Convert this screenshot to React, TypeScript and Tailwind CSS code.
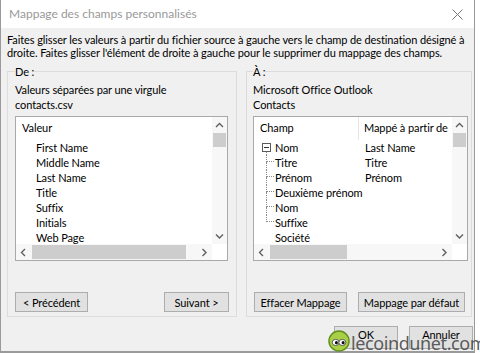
import React from "react";

const LEFT_ITEMS = [
  "First Name",
  "Middle Name",
  "Last Name",
  "Title",
  "Suffix",
  "Initials",
  "Web Page",
];

const CHILDREN = [
  { name: "Titre", mapped: "Titre" },
  { name: "Prénom", mapped: "Prénom" },
  { name: "Deuxième prénom", mapped: "" },
  { name: "Nom", mapped: "" },
  { name: "Suffixe", mapped: "" },
];

function Chevron({ dir }: { dir: "up" | "down" | "left" | "right" }) {
  const horiz = dir === "left" || dir === "right";
  const pts = {
    up: "1,5 4.5,1.5 8,5",
    down: "1,1.5 4.5,5 8,1.5",
    left: "5,1 1.5,4.5 5,8",
    right: "1.5,1 5,4.5 1.5,8",
  }[dir];
  return (
    <svg
      width={horiz ? 7 : 9}
      height={horiz ? 9 : 7}
      viewBox={horiz ? "0 0 7 9" : "0 0 9 7"}
    >
      <polyline points={pts} fill="none" stroke="#606060" strokeWidth="1.4" />
    </svg>
  );
}

function VScroll() {
  return (
    <div className="flex w-[15px] shrink-0 flex-col bg-[#f7f7f7]">
      <div className="flex h-[16px] items-center justify-center">
        <Chevron dir="up" />
      </div>
      <div className="mx-[1px] h-[14px] bg-[#cdcdcd]" />
      <div className="flex-1" />
      <div className="flex h-[16px] items-center justify-center">
        <Chevron dir="down" />
      </div>
    </div>
  );
}

function HScroll({ thumb }: { thumb: string }) {
  return (
    <div className="flex h-[16px] shrink-0">
      <div className="flex flex-1 items-center bg-[#f7f7f7]">
        <div className="flex h-full w-[15px] items-center justify-center">
          <Chevron dir="left" />
        </div>
        <div className={`ml-[1px] h-[14px] bg-[#cdcdcd] ${thumb}`} />
        <div className="flex-1" />
        <div className="flex h-full w-[15px] items-center justify-center">
          <Chevron dir="right" />
        </div>
      </div>
      <div className="w-[15px] bg-white" />
    </div>
  );
}

function Button({ label, w }: { label: string; w: string }) {
  return (
    <button
      className={`flex h-[20px] ${w} items-center justify-center whitespace-nowrap border border-[#adadad] bg-[#e1e1e1] text-[11px] leading-none text-black`}
    >
      {label}
    </button>
  );
}

function GroupBox({
  legend,
  className,
  children,
}: {
  legend: string;
  className: string;
  children: React.ReactNode;
}) {
  return (
    <fieldset
      className={`flex flex-col border border-[#dcdcdc] pb-[4px] ${className}`}
    >
      <legend className="h-[15px] leading-[15px]">{legend}</legend>
      {children}
    </fieldset>
  );
}

function SourceList() {
  return (
    <div className="flex h-[145px] w-[213px] flex-col border border-[#a9a9a9] bg-white">
      <div className="flex min-h-0 flex-1">
        <div className="flex-1 overflow-hidden">
          <div className="flex h-[23px] items-center pl-[6px]">Valeur</div>
          {LEFT_ITEMS.map((item) => (
            <div key={item} className="h-[15px] pl-[20px] leading-[15px]">
              {item}
            </div>
          ))}
        </div>
        <VScroll />
      </div>
      <HScroll thumb="w-[154px]" />
    </div>
  );
}

function TreeConnector({ last }: { last: boolean }) {
  return (
    <div className="ml-[12px] flex w-[8px] shrink-0 flex-col">
      <div className="h-[7px] border-b border-l border-dotted border-[#8a8a8a]" />
      <div
        className={`h-[8px] ${last ? "" : "border-l border-dotted border-[#8a8a8a]"}`}
      />
    </div>
  );
}

function DestList() {
  return (
    <div className="flex h-[145px] w-[215px] flex-col border border-[#a9a9a9] bg-white">
      <div className="flex min-h-0 flex-1">
        <div className="flex-1 overflow-hidden">
          {/* header */}
          <div className="flex h-[23px] whitespace-nowrap">
            <div className="flex w-[105px] shrink-0 items-center border-r border-[#e5e5e5] pl-[6px]">
              Champ
            </div>
            <div className="flex items-center overflow-hidden pl-[5px]">
              Mappé à partir de
            </div>
          </div>

          {/* parent row */}
          <div className="flex h-[15px] whitespace-nowrap leading-[15px]">
            <div className="flex w-[106px] shrink-0">
              <div className="ml-[8px] flex w-[9px] flex-col">
                <div className="h-[3px]" />
                <div className="flex h-[9px] w-[9px] items-center justify-center border border-[#5a5a5a]">
                  <div className="h-[1px] w-[5px] bg-[#333]" />
                </div>
                <div className="ml-[4px] h-[3px] border-l border-dotted border-[#8a8a8a]" />
              </div>
              <span className="ml-[4px]">Nom</span>
            </div>
            <div className="pl-[5px]">Last Name</div>
          </div>

          {/* child rows */}
          {CHILDREN.map((c, i) => (
            <div
              key={c.name + i}
              className="flex h-[15px] whitespace-nowrap leading-[15px]"
            >
              <div className="flex w-[106px] shrink-0">
                <TreeConnector last={i === CHILDREN.length - 1} />
                <span className="ml-[1px]">{c.name}</span>
              </div>
              <div className="pl-[5px]">{c.mapped}</div>
            </div>
          ))}

          <div className="flex h-[15px] whitespace-nowrap leading-[15px]">
            <span className="pl-[21px]">Société</span>
          </div>
        </div>
        <VScroll />
      </div>
      <HScroll thumb="w-[77px]" />
    </div>
  );
}

function Watermark() {
  return (
    <div className="pointer-events-none absolute left-[328px] top-[330px] flex items-center">
      <svg width="22" height="22" viewBox="0 0 23 23">
        <circle cx="11.5" cy="11.5" r="10.5" fill="#a8cf45" stroke="#5f8f1e" strokeWidth="1.5" />
        <ellipse cx="8" cy="13" rx="3.6" ry="3.2" fill="#fff" stroke="#333" strokeWidth="0.8" />
        <ellipse cx="15" cy="13" rx="3.6" ry="3.2" fill="#fff" stroke="#333" strokeWidth="0.8" />
        <circle cx="8.8" cy="13.2" r="1.6" fill="#111" />
        <circle cx="15.8" cy="13.2" r="1.6" fill="#111" />
      </svg>
      <span className="ml-[1px] mt-[3px] font-['Noto_Sans',sans-serif] text-[18px] leading-none tracking-[-0.4px] text-[#4a4a4a]/90">
        lecoindunet.com
      </span>
    </div>
  );
}

export default function App() {
  return (
    <div className="relative h-[353px] w-[480px] overflow-hidden bg-white font-['Lato','Noto_Sans',sans-serif] text-[11px] tracking-[-0.1px] text-black">
      <div className="flex h-[353px] w-[475px] flex-col border-b-2 border-l border-r border-[#9a9a9a] bg-[#f0f0f0]">
        {/* title bar */}
        <div className="flex h-[28px] shrink-0 items-center justify-between bg-white pl-[8px] pr-[11px]">
          <span className="text-[12px] tracking-normal text-[#999]">
            Mappage des champs personnalisés
          </span>
          <svg width="11" height="11" viewBox="0 0 11 11">
            <path d="M0.5 0.5 L10.5 10.5 M10.5 0.5 L0.5 10.5" stroke="#777" strokeWidth="1" />
          </svg>
        </div>

        {/* instructions */}
        <div className="mt-[5px] whitespace-nowrap pl-[6px] leading-[13px]">
          <p>
            Faites glisser les valeurs à partir du fichier source à gauche vers
            le champ de destination désigné à
          </p>
          <p>
            droite. Faites glisser l'élément de droite à gauche pour le
            supprimer du mappage des champs.
          </p>
        </div>

        {/* groups */}
        <div className="mt-[5px] flex gap-[9px] pl-[6px]">
          <GroupBox legend="De :" className="w-[230px] pl-[7px] pr-[7px]">
            <div className="mt-[3px] h-[15px] leading-[15px]">
              Valeurs séparées par une virgule
            </div>
            <div className="h-[15px] leading-[15px]">contacts.csv</div>
            <div className="mt-[4px]">
              <SourceList />
            </div>
            <div className="mt-[31px] flex justify-between">
              <Button label="< Précédent" w="w-[73px]" />
              <Button label="Suivant >" w="w-[65px]" />
            </div>
          </GroupBox>

          <GroupBox legend="À :" className="w-[226px] pl-[6px] pr-[3px]">
            <div className="mt-[3px] h-[15px] leading-[15px]">
              Microsoft Office Outlook
            </div>
            <div className="h-[15px] leading-[15px]">Contacts</div>
            <div className="mt-[4px]">
              <DestList />
            </div>
            <div className="ml-[1px] mt-[31px] flex gap-[11px]">
              <Button label="Effacer Mappage" w="w-[93px]" />
              <Button label="Mappage par défaut" w="w-[107px]" />
            </div>
          </GroupBox>
        </div>

        {/* dialog buttons */}
        <div className="mt-[9px] flex justify-end gap-[11px] pr-[1px]">
          <button className="h-[23px] w-[64px] border border-[#adadad] bg-[#e1e1e1] pb-[4px] text-[11px]">
            OK
          </button>
          <button className="h-[23px] w-[64px] border border-[#adadad] bg-[#e1e1e1] pb-[4px] text-[11px]">
            Annuler
          </button>
        </div>
      </div>
      <Watermark />
    </div>
  );
}
